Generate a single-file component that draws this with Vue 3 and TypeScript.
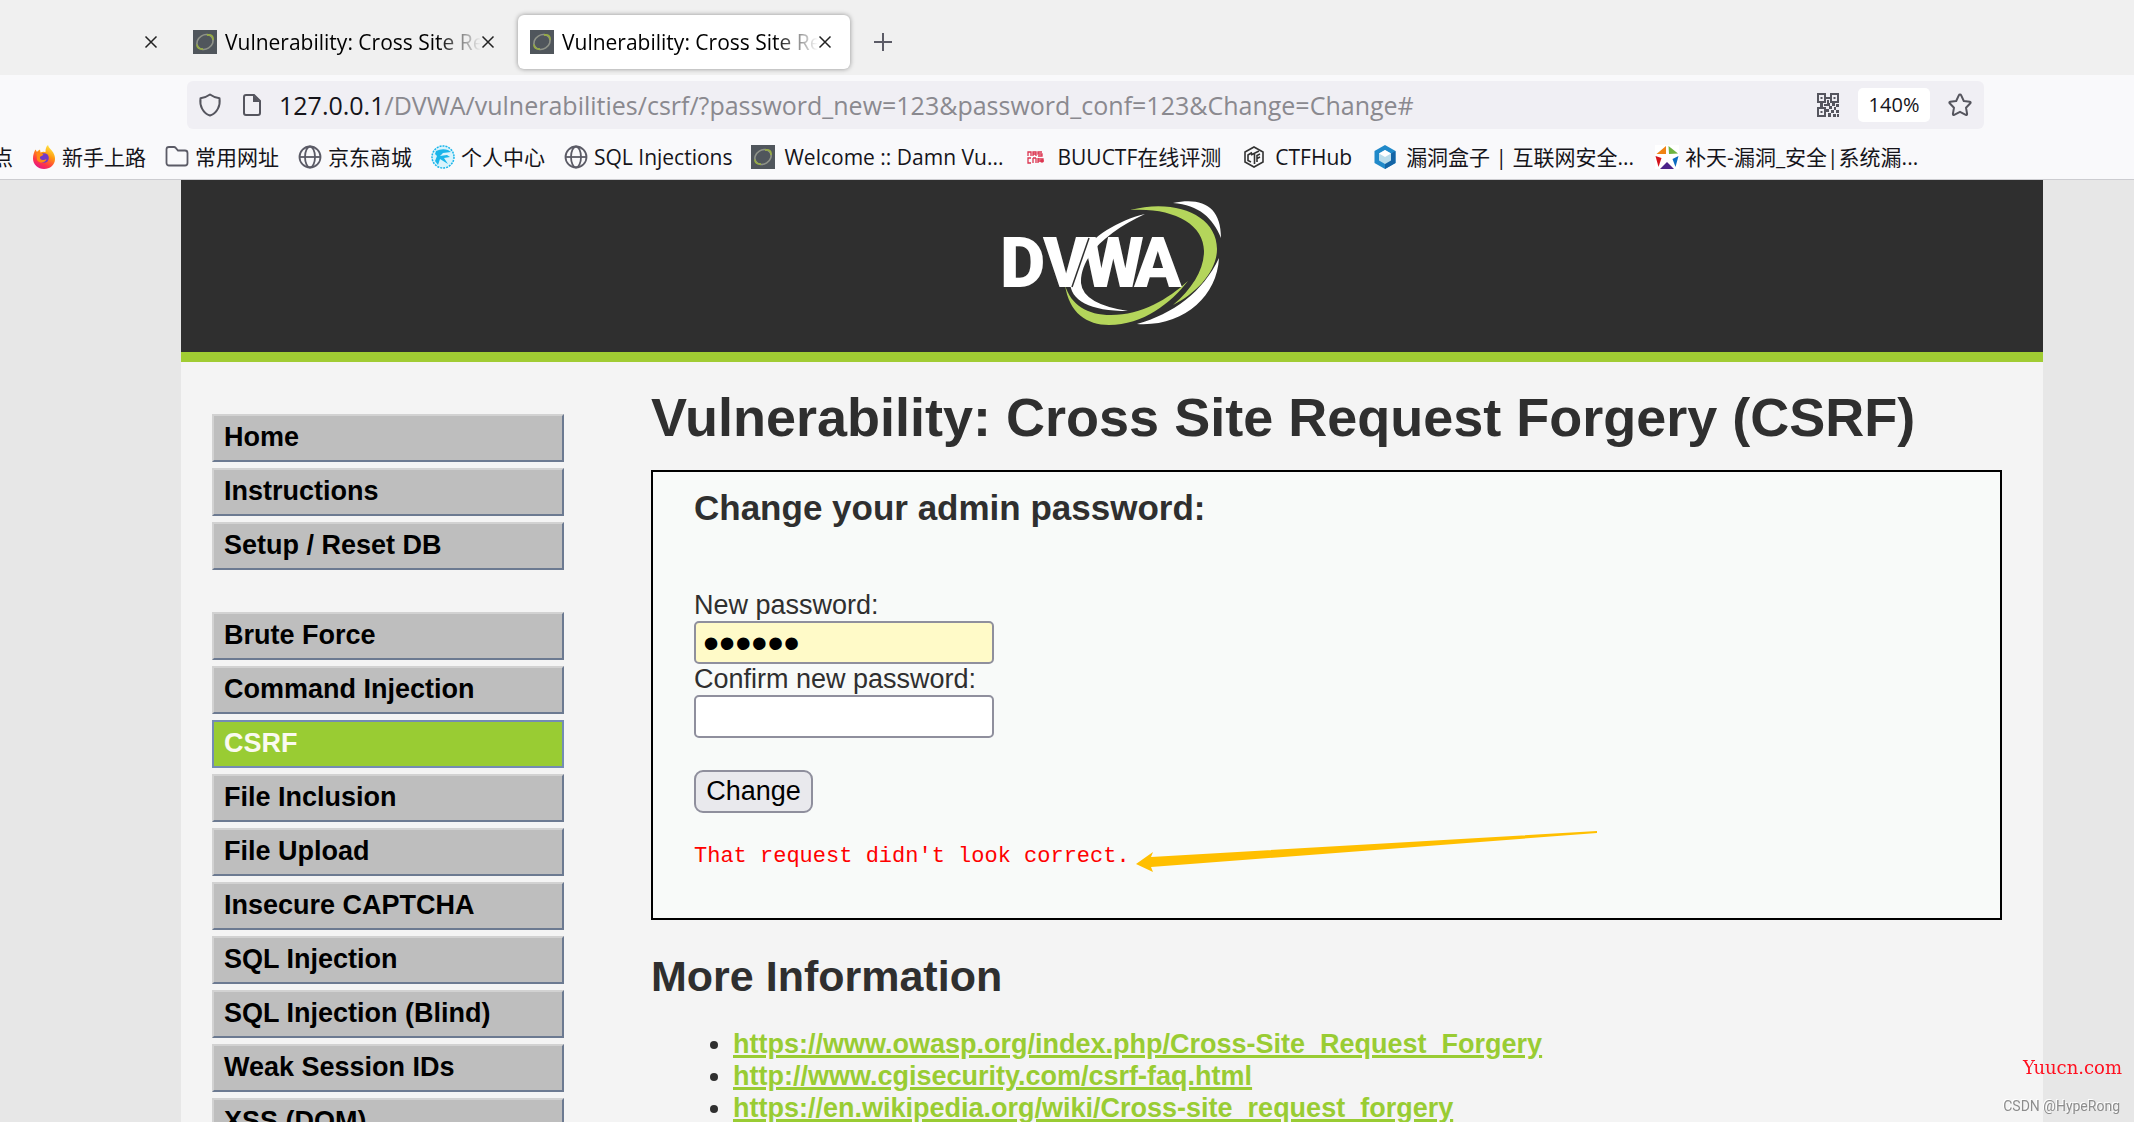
<script setup lang="ts">
interface Tab {
  title: string
  active: boolean
}

interface Bookmark {
  label: string
  icon: string
  site?: boolean
}

interface MenuItem {
  label: string
  active?: boolean
}

const tabs: Tab[] = [
  { title: 'Vulnerability: Cross Site Request', active: false },
  { title: 'Vulnerability: Cross Site Request', active: true },
]

const bookmarks: Bookmark[] = [
  { label: '新手上路', icon: 'firefox' },
  { label: '常用网址', icon: 'folder' },
  { label: '京东商城', icon: 'globe' },
  { label: '个人中心', icon: 'badge' },
  { label: 'SQL Injections', icon: 'globe' },
  { label: 'Welcome :: Damn Vu...', icon: 'dvwa', site: true },
  { label: 'BUUCTF在线评测', icon: 'buu', site: true },
  { label: 'CTFHub', icon: 'ctfhub', site: true },
  { label: '漏洞盒子 | 互联网安全...', icon: 'box', site: true },
  { label: '补天-漏洞_安全|系统漏...', icon: 'butian' },
]

const menuGroups: MenuItem[][] = [
  [{ label: 'Home' }, { label: 'Instructions' }, { label: 'Setup / Reset DB' }],
  [
    { label: 'Brute Force' },
    { label: 'Command Injection' },
    { label: 'CSRF', active: true },
    { label: 'File Inclusion' },
    { label: 'File Upload' },
    { label: 'Insecure CAPTCHA' },
    { label: 'SQL Injection' },
    { label: 'SQL Injection (Blind)' },
    { label: 'Weak Session IDs' },
    { label: 'XSS (DOM)' },
  ],
]

const links: string[] = [
  'https://www.owasp.org/index.php/Cross-Site_Request_Forgery',
  'http://www.cgisecurity.com/csrf-faq.html',
  'https://en.wikipedia.org/wiki/Cross-site_request_forgery',
]
</script>

<template>
  <div class="browser">
    <div class="tab-strip">
      <div class="tab tab-cut">
        <button class="close" aria-label="Close tab">
          <svg width="14" height="14" viewBox="0 0 14 14"><path d="M1.500 1.500l11 11M12.500 1.500l-11 11" stroke="#222" stroke-width="1.500" /></svg>
        </button>
      </div>
      <div v-for="(tab, i) in tabs" :key="i" class="tab" :class="{ active: tab.active }">
        <svg class="fav" viewBox="0 0 24 24">
          <rect width="24" height="24" fill="#50565c" />
          <ellipse cx="12" cy="12" rx="8.500" ry="7" transform="rotate(-32 12 12)" fill="none" stroke="#8f9389" stroke-width="1.600" />
          <path d="M14 5q6.500-1 6 5M4 14.500q0 5 6 4.500" fill="none" stroke="#96ab45" stroke-width="1.800" />
        </svg>
        <span class="tab-title">{{ tab.title }}</span>
        <button class="close" aria-label="Close tab">
          <svg width="14" height="14" viewBox="0 0 14 14"><path d="M1.500 1.500l11 11M12.500 1.500l-11 11" stroke="#222" stroke-width="1.500" /></svg>
        </button>
      </div>
      <button class="new-tab" aria-label="New tab">
        <svg width="18" height="18" viewBox="0 0 18 18"><path d="M9 0v18M0 9h18" stroke="#5b5b66" stroke-width="2" /></svg>
      </button>
    </div>

    <div class="toolbar">
      <div class="url-bar">
        <svg class="url-icon" viewBox="0 0 24 24"><path d="M12 1.500c3 2.200 6 3.300 9.500 3.800 1 7-2 14.700-9.500 17.200C4.500 20 1.500 12.300 2.500 5.300 6 4.800 9 3.700 12 1.500z" fill="none" stroke="#55555e" stroke-width="2" stroke-linejoin="round" /></svg>
        <svg class="url-icon page-icon" viewBox="0 0 24 24"><path d="M6 2h8l6 6v12a2 2 0 0 1-2 2H6a2 2 0 0 1-2-2V4a2 2 0 0 1 2-2z" fill="none" stroke="#55555e" stroke-width="2" /><path d="M13 2v7h7z" fill="#55555e" /></svg>
        <div class="url"><span class="host">127.0.0.1</span>/DVWA/vulnerabilities/csrf/?password_new=123&amp;password_conf=123&amp;Change=Change#</div>
        <svg class="qr" viewBox="0 0 22 24" fill="#55555e">
          <path fill-rule="evenodd" d="M0 0h9v10H0zM2 2v6h5V2zM13 0h9v10h-9zM15 2v6h5V2zM0 14h9v10H0zM2 16v6h5v-6z" />
          <path d="M3.500 4h2v2h-2zM16.500 4h2v2h-2zM3.500 18h2v2h-2zM9 4h4v2H9zM10 7h2v3h-2zM3 10h3v4H3zM7 11h3v2H7zM10 10h3v3h-3zM15 10h3v3h-3zM19 11h3v3h-3zM12 13h3v3h-3zM17 14h2v3h-2zM9 16h3v3H9zM14 17h3v3h-3zM19 17h3v3h-3zM11 20h3v4h-3zM16 21h3v3h-3zM20 21h2v3h-2z" />
        </svg>
        <button class="zoom-level">140%</button>
        <svg class="star" viewBox="0 0 24 24"><path d="M12 1.500q.8 0 1.200.9l2.600 5.600 6 .8q1.400.3.500 1.500L18 14.700l1.100 6.200q.1 1.500-1.300.9L12 18.800l-5.800 3q-1.400.6-1.300-.9L6 14.700 1.700 10.300q-.9-1.200.5-1.500l6-.8 2.600-5.600q.4-.9 1.200-.9z" fill="none" stroke="#55555e" stroke-width="2" stroke-linejoin="round" /></svg>
      </div>

      <div class="bookmarks">
        <a href="#" class="bookmark"><span>点</span></a>
        <a v-for="b in bookmarks" :key="b.label" href="#" class="bookmark" :class="{ site: b.site }">
          <svg v-if="b.icon === 'firefox'" class="fav" viewBox="0 0 24 24">
            <defs>
              <linearGradient id="flame" x1="0.8" y1="0" x2="0.3" y2="1">
                <stop offset="0" stop-color="#fff04a" />
                <stop offset="0.400" stop-color="#ff980e" />
                <stop offset="0.750" stop-color="#ff3647" />
                <stop offset="1" stop-color="#e31587" />
              </linearGradient>
            </defs>
            <path d="M16 0c.5 3 3.500 4.500 5.200 7.500C22.500 10 23 11.500 23 14c0 6-5 10-11 10S1 19.500 1 13.500C1 10 2 7 3.500 4.500L5 7c1-1.500 2-2 3-2.500l.5 3C11 6 13 7 13.500 7c0-3 .5-5.500 2.500-7z" fill="url(#flame)" />
            <circle cx="12" cy="13" r="4.800" fill="#7139c8" />
            <path d="M4.500 8c3-.5 5 .5 7 1.500-1.500 2-4 1.500-3.500 3.500.5 2.500 4.500 2.500 6.500 1-1 4-6.500 5-9.500 1z" fill="#ff8a16" />
          </svg>
          <svg v-else-if="b.icon === 'folder'" class="fav" viewBox="0 0 24 24"><path d="M4 2h5q1 0 1.700.8L13 5.500h7A2.500 2.500 0 0 1 22.500 8v10a2.500 2.500 0 0 1-2.500 2.500H4A2.500 2.500 0 0 1 1.500 18V4.500A2.500 2.500 0 0 1 4 2z" fill="none" stroke="#5b5b66" stroke-width="1.800" /></svg>
          <svg v-else-if="b.icon === 'globe'" class="fav" viewBox="0 0 24 24" fill="none" stroke="#5b5b66" stroke-width="1.800"><circle cx="12" cy="12" r="10.500" /><ellipse cx="12" cy="12" rx="5" ry="10.500" /><path d="M1.500 12h21" /></svg>
          <svg v-else-if="b.icon === 'badge'" class="fav" viewBox="0 0 24 24"><circle cx="12" cy="12" r="11" fill="#d9f3fc" stroke="#19b5ea" stroke-width="1.500" stroke-dasharray="2 1" /><path d="M5 6q6-3 12-1l3 2-8 1-3 3 7-1 3 2-6 1 4 6-8-5-2 6-3-4 2-5-2-2z" fill="#19b5ea" /></svg>
          <svg v-else-if="b.icon === 'dvwa'" class="fav" viewBox="0 0 24 24">
            <rect width="24" height="24" fill="#50565c" />
            <ellipse cx="12" cy="12" rx="8.500" ry="7" transform="rotate(-32 12 12)" fill="none" stroke="#8f9389" stroke-width="1.600" />
            <path d="M14 5q6.500-1 6 5M4 14.500q0 5 6 4.500" fill="none" stroke="#96ab45" stroke-width="1.800" />
          </svg>
          <svg v-else-if="b.icon === 'buu'" class="fav" viewBox="0 0 24 24" fill="none" stroke="#dc3550" stroke-width="1.300"><path d="M4 11V7h3v4M9 11V7h3v4M9 9h3M18 7h-4v2h4v2h-4M7 13H4v5h3M9 13v5M9 13h3M12 13v5M14 13v5M14 14h5v2h-5" /><circle cx="18" cy="16" r="1.800" fill="#dc3550" stroke="none" /></svg>
          <svg v-else-if="b.icon === 'ctfhub'" class="fav" viewBox="0 0 24 24" fill="none" stroke="#333"><path d="M12 2l9 5v10l-9 5-9-5V7z" stroke-width="1.600" /><path d="M10 7.500L6 10v5.500l3 1.500M9 10l8-4M12.500 9v10M18 9l-3 1.500V17M15 13.500l3-1.500" stroke-width="1.600" /></svg>
          <svg v-else-if="b.icon === 'box'" class="fav" viewBox="0 0 24 24"><path d="M12 0l10.500 6v12L12 24 1.500 18V6z" fill="#2089c9" /><path d="M12 24V12l10.500-6v12z" fill="#1464a5" /><path d="M12 5l6 3.500v7L12 19l-6-3.500v-7z" fill="#b9dceb" /><path d="M12 5l6 3.500-6 3.500-6-3.500z" fill="#fff" /></svg>
          <svg v-else class="fav" viewBox="0 0 24 24"><rect width="24" height="24" fill="#fff" /><path d="M11 1v8H1.500z" fill="#f08313" /><path d="M13.500 1L23 8.500l-9 .5z" fill="#6db33f" /><path d="M.5 11l6 2-3 9z" fill="#d4121b" /><path d="M23.500 11l-6 3 3 8z" fill="#0a6ac0" /><path d="M12 17l7 7H5z" fill="#4b2389" /></svg>
          <span>{{ b.label }}</span>
        </a>
      </div>
    </div>

    <div class="viewport">
      <div class="container">
        <header class="header">
          <svg class="logo" viewBox="0 0 218 124" role="img" aria-label="DVWA">
            <path d="M142 13C104 22 69 50 67 80c0 20 20 30 58 30Q80 103 78 82C77 54 107 29 142 13z" fill="#fff" />
            <path d="M62 84C66 112 84 124 106 124c34 0 62-22 79-44-20 18-46 34-77 34C84 114 68 104 62 84z" fill="#b4d55b" />
            <path d="M127 9C172-3 214 14 214 48c0 22-20 44-44 56 20-17 31-36 31-54C201 22 168 6 127 9z" fill="#b4d55b" />
            <path d="M170 2C200-4 218 6 218 37 210 17 196 4 170 2z" fill="#fff" />
            <path d="M216 57C214 96 180 126 134 123c36-10 66-32 82-66z" fill="#fff" />
            <g class="logo-text"><text x="-3" y="86">D</text><text x="40" y="86">V</text><text x="80" y="86">W</text><text x="131" y="86">A</text></g>
            <path d="M69 86L86 37" stroke="#2f2f2f" stroke-width="1.500" />
          </svg>
        </header>

        <div class="body">
          <nav class="menu">
            <ul v-for="(group, g) in menuGroups" :key="g" class="menu-group">
              <li v-for="item in group" :key="item.label">
                <a href="#" class="menu-link" :class="{ selected: item.active }">{{ item.label }}</a>
              </li>
            </ul>
          </nav>

          <main class="main">
            <h1>Vulnerability: Cross Site Request Forgery (CSRF)</h1>
            <section class="panel">
              <h3>Change your admin password:</h3>
              <form @submit.prevent>
                <label for="new-password">New password:</label>
                <input id="new-password" class="filled" type="password" value="123456" autocomplete="off" />
                <label for="confirm-password">Confirm new password:</label>
                <input id="confirm-password" type="password" autocomplete="off" />
                <button class="submit" type="submit">Change</button>
              </form>
              <pre class="message">That request didn't look correct.<svg class="arrow" viewBox="0 0 462 42" aria-hidden="true"><path d="M0 34L17 22l-2 5L461 1v2L15 37l2 5z" fill="#ffbf00" /></svg></pre>
            </section>
            <h2>More Information</h2>
            <ul class="links">
              <li v-for="link in links" :key="link"><a :href="link">{{ link }}</a></li>
            </ul>
          </main>
        </div>
      </div>
    </div>

    <div class="marks">
      <span class="mark-site">Yuucn.com</span>
      <span class="mark-author">CSDN @HypeRong</span>
    </div>
  </div>
</template>

<style>
body {
  margin: 0;
  overflow: hidden;
}
</style>

<style scoped>
.browser {
  display: flex;
  flex-direction: column;
  height: 100vh;
  overflow: hidden;
  background: #e7e7e7;
  font-family: "Open Sans", "Noto Sans", "Noto Sans CJK SC", sans-serif;
  color: #15141a;
}

button {
  padding: 0;
  border: 0;
  background: none;
  font: inherit;
  color: inherit;
}

svg {
  display: block;
  flex: none;
}

.fav {
  width: 24px;
  height: 24px;
}

.tab-strip {
  display: flex;
  flex: none;
  align-items: center;
  gap: 5px;
  height: 54px;
  padding: 15px 0 6px;
  background: #f0f0f0;
  font-size: 21px;
}

.tab {
  box-sizing: border-box;
  display: flex;
  align-items: center;
  width: 332px;
  height: 54px;
  padding: 0 18px 0 12px;
  border-radius: 6px;
  color: #000;
}

.tab-cut {
  justify-content: flex-end;
  width: 176px;
}

.tab.active {
  background: #fff;
  box-shadow: 0 0 5px rgba(0, 0, 0, 0.4);
}

.tab-title {
  flex: 1;
  margin-left: 8px;
  overflow: hidden;
  white-space: nowrap;
  mask-image: linear-gradient(to left, transparent, #000 44px);
}

.close {
  flex: none;
}

.new-tab {
  margin-left: 19px;
}

.toolbar {
  flex: none;
  padding-top: 6px;
  border-bottom: 1px solid #ccccd0;
  background: #f9f9fb;
}

.url-bar {
  display: flex;
  align-items: center;
  height: 48px;
  margin: 0 150px 0 187px;
  padding: 0 12px 0 11px;
  border-radius: 6px;
  background: #f0eff4;
}

.url-icon {
  width: 24px;
  height: 24px;
}

.page-icon {
  margin-left: 18px;
}

.url {
  flex: 1;
  margin-left: 15px;
  font-size: 25px;
  line-height: 34px;
  color: #8a898f;
  white-space: nowrap;
}

.host {
  color: #15141a;
}

.qr {
  width: 22px;
  height: 24px;
}

.zoom-level {
  width: 72px;
  height: 34px;
  margin: 0 18px 0 19px;
  border-radius: 5px;
  background: #fff;
  font-size: 20px;
  line-height: 34px;
}

.star {
  width: 24px;
  height: 24px;
}

.bookmarks {
  display: flex;
  align-items: center;
  gap: 19px;
  height: 44px;
  margin-left: -8px;
  padding: 6px 0 0;
  font-size: 21px;
  line-height: 30px;
  white-space: nowrap;
}

.bookmark {
  display: flex;
  align-items: center;
  gap: 6px;
  color: inherit;
  text-decoration: none;
}

.bookmark.site {
  gap: 9px;
  margin-right: 2px;
}

.viewport {
  flex: 1;
  min-height: 0;
  overflow: hidden;
}

.container {
  min-height: 100%;
  margin: 0 91px 0 181px;
  background: #f4f4f4;
  font-family: "Liberation Sans", Arial, sans-serif;
  font-size: 27px;
  line-height: 31px;
  color: #2f2f2f;
}

.header {
  display: flex;
  justify-content: center;
  padding: 21px 0 27px;
  border-bottom: 10px solid #a1cc33;
  background: #2f2f2f;
}

.logo {
  width: 218px;
  height: 124px;
}

.logo-text {
  font-family: Roboto, sans-serif;
  font-size: 70px;
  font-weight: 900;
  fill: #fff;
}

.body {
  display: flex;
  align-items: flex-start;
}

.menu {
  display: flex;
  flex: none;
  flex-direction: column;
  gap: 42px;
  width: 352px;
  padding: 52px 87px 0 31px;
  font-weight: bold;
}

.menu-group {
  display: flex;
  flex-direction: column;
  gap: 6px;
  margin: 0;
  padding: 0;
  list-style: none;
}

.menu-link {
  display: block;
  padding: 6px 10px 7px;
  border: 2px solid;
  border-color: #d2d2d2 #6c7a91 #6c7a91 #d2d2d2;
  background: #bebebe;
  color: #000;
  text-decoration: none;
}

.menu-link.selected {
  border-color: #748cb4;
  background: #99cc33;
  color: #fafaf0;
}

.main {
  flex: 1;
  padding: 24px 41px 0 0;
}

h1 {
  margin: 0 0 22px;
  font-size: 54px;
  line-height: 62px;
  white-space: nowrap;
}

h2 {
  margin: 31px 0 27px;
  font-size: 43px;
  line-height: 50px;
}

h3 {
  margin: 0 0 61px;
  font-size: 35px;
  line-height: 42px;
}

.panel {
  padding: 15px 41px 46px;
  border: 2px solid #000;
  background: #f8faf9;
}

form {
  display: flex;
  flex-direction: column;
  align-items: flex-start;
}

input {
  box-sizing: border-box;
  width: 300px;
  height: 43px;
  padding: 2px 7px;
  border: 2px solid #8f8f9d;
  border-radius: 5px;
  background: #fff;
  font-family: "Liberation Sans", Arial, sans-serif;
  font-size: 46px;
  line-height: 35px;
  color: #000;
}

input.filled {
  background: #fffac8;
}

.submit {
  width: 119px;
  height: 43px;
  margin-top: 32px;
  border: 2px solid #8f8f9d;
  border-radius: 9px;
  background: #e9e9ed;
  line-height: 39px;
  color: #000;
}

.message {
  position: relative;
  width: max-content;
  margin: 28px 0 0;
  font-family: "Liberation Mono", monospace;
  font-size: 22px;
  color: #ff0000;
}

.arrow {
  position: absolute;
  top: -11px;
  left: 100%;
  width: 462px;
  height: 42px;
  margin-left: 6px;
}

.links {
  margin: 0;
  padding-left: 82px;
  line-height: 32px;
}

.links a {
  font-weight: bold;
  color: #99cc33;
  text-decoration-thickness: 3px;
}

.marks {
  position: fixed;
  right: 12px;
  bottom: 5px;
  display: flex;
  flex-direction: column;
  align-items: flex-end;
  gap: 16px;
  line-height: 22px;
}

.mark-site {
  font-family: "DejaVu Serif", serif;
  font-size: 18px;
  color: #ff1020;
}

.mark-author {
  margin-right: 2px;
  font-family: Roboto, sans-serif;
  font-size: 14px;
  color: #8d8d8d;
  text-shadow: -1px -1px 0 #fff;
}
</style>
